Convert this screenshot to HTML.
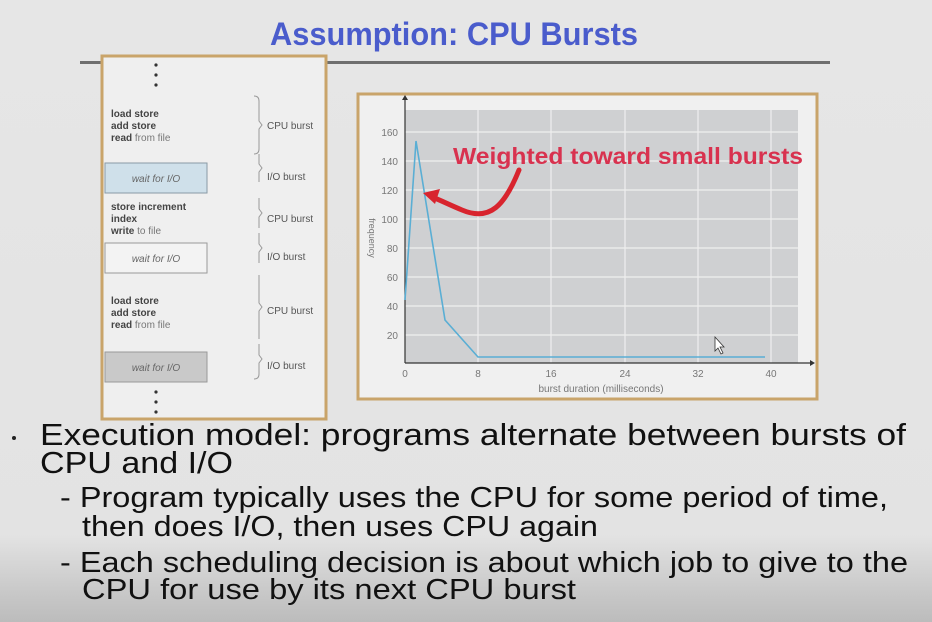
<!DOCTYPE html>
<html><head><meta charset="utf-8"><style>
html,body{margin:0;padding:0;width:932px;height:622px;overflow:hidden}
body{background:#e4e4e4}
svg{display:block}
</style></head><body>
<svg width="932" height="622" viewBox="0 0 932 622" xmlns="http://www.w3.org/2000/svg" font-family="Liberation Sans, sans-serif">
<defs><linearGradient id="bg" x1="0" y1="0" x2="0" y2="1">
<stop offset="0" stop-color="#e6e6e6"/><stop offset="0.86" stop-color="#e3e3e3"/><stop offset="0.95" stop-color="#c9c9c9"/><stop offset="1" stop-color="#bcbcbc"/></linearGradient></defs>
<rect width="932" height="622" fill="url(#bg)"/>
<text x="270" y="45" textLength="368" lengthAdjust="spacingAndGlyphs" font-size="32" font-weight="bold" fill="#4a5ccc">Assumption: CPU Bursts</text>
<rect x="80" y="61" width="750" height="3" fill="#6f6f6f"/>
<rect x="102" y="56" width="224" height="363" fill="#efefef" stroke="#c9a46a" stroke-width="3"/>
<g fill="#333"><circle cx="156" cy="65" r="1.6"/><circle cx="156" cy="75" r="1.6"/><circle cx="156" cy="85" r="1.6"/>
<circle cx="156" cy="392" r="1.6"/><circle cx="156" cy="402" r="1.6"/><circle cx="156" cy="412" r="1.6"/></g>
<g font-size="10" fill="#444">
<text x="111" y="117" font-weight="bold">load store</text>
<text x="111" y="129" font-weight="bold">add store</text>
<text x="111" y="141"><tspan font-weight="bold">read</tspan><tspan fill="#777"> from file</tspan></text>
<text x="111" y="210" font-weight="bold">store increment</text>
<text x="111" y="222" font-weight="bold">index</text>
<text x="111" y="234"><tspan font-weight="bold">write</tspan><tspan fill="#777"> to file</tspan></text>
<text x="111" y="304" font-weight="bold">load store</text>
<text x="111" y="316" font-weight="bold">add store</text>
<text x="111" y="328"><tspan font-weight="bold">read</tspan><tspan fill="#777"> from file</tspan></text>
</g>
<rect x="105" y="163" width="102" height="30" fill="#cfe0ea" stroke="#8a9aa5"/>
<rect x="105" y="243" width="102" height="30" fill="#f3f3f3" stroke="#999"/>
<rect x="105" y="352" width="102" height="30" fill="#c9c9c9" stroke="#999"/>
<g font-size="10" font-style="italic" fill="#666" text-anchor="middle">
<text x="156" y="182">wait for I/O</text><text x="156" y="262">wait for I/O</text><text x="156" y="371">wait for I/O</text></g>
<g fill="none" stroke="#999" stroke-width="1">
<path d="M254 96 q5 0 5 5 v20 l3 4 l-3 4 v20 q0 5 -5 5"/>
<path d="M259 154 v10 l3 4 l-3 4 v10"/>
<path d="M259 198 v11 l3 4 l-3 4 v11"/>
<path d="M259 233 v11 l3 4 l-3 4 v11"/>
<path d="M259 275 v28 l3 4 l-3 4 v28"/>
<path d="M259 344 v11 l3 4 l-3 4 v11 q0 5 -5 5"/>
</g>
<g font-size="10" fill="#555">
<text x="267" y="129">CPU burst</text><text x="267" y="180">I/O burst</text>
<text x="267" y="222">CPU burst</text><text x="267" y="260">I/O burst</text>
<text x="267" y="314">CPU burst</text><text x="267" y="369">I/O burst</text></g>
<rect x="358" y="94" width="459" height="305" fill="#f0f0f0" stroke="#c9a46a" stroke-width="3"/>
<rect x="405" y="110" width="393" height="253" fill="#cfd0d2"/>
<g stroke="#efefef" stroke-width="1.2">
<line x1="405" y1="132" x2="798" y2="132"/><line x1="405" y1="161" x2="798" y2="161"/>
<line x1="405" y1="190" x2="798" y2="190"/><line x1="405" y1="219" x2="798" y2="219"/>
<line x1="405" y1="248" x2="798" y2="248"/><line x1="405" y1="277" x2="798" y2="277"/>
<line x1="405" y1="306" x2="798" y2="306"/><line x1="405" y1="335" x2="798" y2="335"/>
<line x1="478" y1="110" x2="478" y2="363"/><line x1="551" y1="110" x2="551" y2="363"/>
<line x1="625" y1="110" x2="625" y2="363"/><line x1="698" y1="110" x2="698" y2="363"/>
<line x1="771" y1="110" x2="771" y2="363"/></g>
<g stroke="#333" stroke-width="1.2"><line x1="405" y1="100" x2="405" y2="363"/><line x1="405" y1="363" x2="812" y2="363"/></g>
<path d="M402 100 l3 -5 l3 5z M810 360 l5 3 l-5 3z" fill="#333"/>
<g font-size="10" fill="#777" text-anchor="end">
<text x="398" y="136">160</text><text x="398" y="165">140</text><text x="398" y="194">120</text><text x="398" y="223">100</text>
<text x="398" y="252">80</text><text x="398" y="281">60</text><text x="398" y="310">40</text><text x="398" y="339">20</text></g>
<g font-size="10" fill="#777" text-anchor="middle">
<text x="405" y="377">0</text><text x="478" y="377">8</text><text x="551" y="377">16</text><text x="625" y="377">24</text><text x="698" y="377">32</text><text x="771" y="377">40</text>
<text x="601" y="392">burst duration (milliseconds)</text></g>
<text transform="translate(369,238) rotate(90)" font-size="9" fill="#777" text-anchor="middle">frequency</text>
<polyline points="405,300 416,141 445,320 478,357 765,357" fill="none" stroke="#5aaed4" stroke-width="1.6"/>
<text x="453" y="164" textLength="350" lengthAdjust="spacingAndGlyphs" font-size="23" font-weight="bold" fill="#d8324f">Weighted toward small bursts</text>
<path d="M519 170 C505 205 490 222 462 210 C450 205 440 200 432 197" fill="none" stroke="#d8242e" stroke-width="5" stroke-linecap="round"/>
<path d="M423 193 L440 189 L435 204 Z" fill="#d8242e"/>
<path d="M715 337 v14 l3 -3 l3 6 l2 -1 l-3 -6 h4 z" fill="#fff" stroke="#333" stroke-width="0.8"/>
<circle cx="14" cy="438" r="2" fill="#222"/>
<g font-size="31" fill="#111">
<text x="40" y="445" textLength="866" lengthAdjust="spacingAndGlyphs">Execution model: programs alternate between bursts of</text>
<text x="40" y="473" textLength="193" lengthAdjust="spacingAndGlyphs">CPU and I/O</text>
</g>
<g font-size="29" fill="#111">
<text x="60" y="507" textLength="828" lengthAdjust="spacingAndGlyphs">- Program typically uses the CPU for some period of time,</text>
<text x="82" y="536" textLength="516" lengthAdjust="spacingAndGlyphs">then does I/O, then uses CPU again</text>
<text x="60" y="572" textLength="848" lengthAdjust="spacingAndGlyphs">- Each scheduling decision is about which job to give to the</text>
<text x="82" y="599" textLength="494" lengthAdjust="spacingAndGlyphs">CPU for use by its next CPU burst</text>
</g>
</svg>
</body></html>
